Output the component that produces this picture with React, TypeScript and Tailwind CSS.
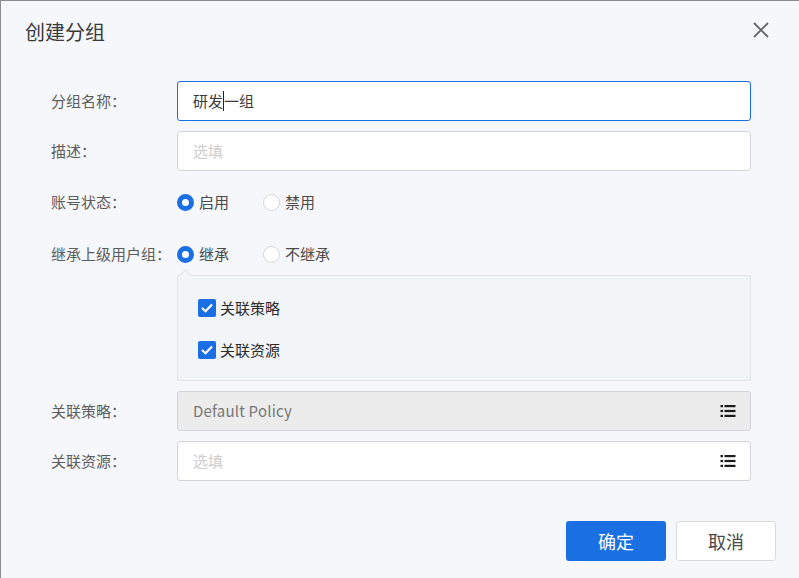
import React from "react";

const label = "-mt-[1px] w-[126px] shrink-0 text-[15px] leading-[20px] text-[#5c5c5c]";

function ListIcon() {
  return (
    <svg width="16" height="14" viewBox="0 0 16 14" className="block">
      <g fill="#1c1c1c">
        <rect x="0.5" y="1" width="2.5" height="2.2" />
        <rect x="4.5" y="1" width="11" height="2.2" />
        <rect x="0.5" y="5.9" width="2.5" height="2.2" />
        <rect x="4.5" y="5.9" width="11" height="2.2" />
        <rect x="0.5" y="10.8" width="2.5" height="2.2" />
        <rect x="4.5" y="10.8" width="11" height="2.2" />
      </g>
    </svg>
  );
}

function Radio({ on, text, w }: { on?: boolean; text: string; w: string }) {
  return (
    <div className={`flex items-center gap-[5px] ${w}`}>
      {on ? (
        <span className="h-[17px] w-[17px] rounded-full border-[5px] border-[#1a6fe3] bg-white" />
      ) : (
        <span className="h-[17px] w-[17px] rounded-full border border-[#d4d6da] bg-white" />
      )}
      <span className="text-[15px] leading-[20px] text-[#4a4a4a]">{text}</span>
    </div>
  );
}

function Check({ text }: { text: string }) {
  return (
    <div className="flex items-center gap-[4px]">
      <span className="flex h-[18px] w-[18px] items-center justify-center rounded-[2px] bg-[#1a6fe3]">
        <svg width="12" height="10" viewBox="0 0 12 10">
          <path d="M1 5 L4.5 8.2 L11 1.4" fill="none" stroke="#fff" strokeWidth="2.2" />
        </svg>
      </span>
      <span className="text-[15px] leading-[20px] text-[#2a2a2a]">{text}</span>
    </div>
  );
}

export default function App() {
  return (
    <div
      className="h-[578px] w-[799px] overflow-hidden border-l border-t border-[#8c8c8c] bg-[#f5f7fa]"
      style={{ fontFamily: '"Noto Sans CJK SC", "Noto Sans", sans-serif' }}
    >
      <div className="flex h-[80px] items-start justify-between pl-[24px] pr-[29px] pt-[17px]">
        <h1 className="text-[20px] font-normal leading-[28px] text-[#3a3a3a]">创建分组</h1>
        <svg width="18" height="18" viewBox="0 0 18 18" className="mt-[3px]">
          <path d="M2 2 L16 16 M16 2 L2 16" stroke="#666" strokeWidth="1.8" fill="none" />
        </svg>
      </div>

      <div className="flex flex-col pl-[50px]">
        <div className="flex items-center">
          <span className={label}>分组名称：</span>
          <div className="flex h-[40px] w-[574px] items-center rounded-[3px] border border-[#1a6fe3] bg-white pl-[15px] text-[15px] text-[#3a3a3a]">
            研发<span className="h-[20px] w-px bg-[#222]" />一组
          </div>
        </div>

        <div className="mt-[10px] flex items-center">
          <span className={label}>描述：</span>
          <div className="flex h-[40px] w-[574px] items-center rounded-[3px] border border-[#d2d4d9] bg-white pl-[15px] text-[15px] text-[#cdcdcd]">
            选填
          </div>
        </div>

        <div className="mt-[21px] flex h-[20px] items-center">
          <span className={label}>账号状态：</span>
          <Radio on text="启用" w="w-[86px]" />
          <Radio text="禁用" w="w-[86px]" />
        </div>

        <div className="mt-[32px] flex h-[20px] items-center">
          <span className={label}>继承上级用户组：</span>
          <Radio on text="继承" w="w-[86px]" />
          <Radio text="不继承" w="w-[86px]" />
        </div>

        <div className="ml-[126px] mt-[11px] w-[574px]">
          <div className="relative flex h-[106px] flex-col gap-[22px] rounded-[2px] border border-[#dfe2e7] bg-[#f2f5f8] pl-[20px] pt-[22px]">
            <span className="absolute -top-[5px] left-[3px] h-[9px] w-[9px] rotate-45 border-l border-t border-[#dfe2e7] bg-[#f2f5f8]" />
            <Check text="关联策略" />
            <Check text="关联资源" />
          </div>
        </div>

        <div className="mt-[10px] flex items-center">
          <span className={label}>关联策略：</span>
          <div className="flex h-[40px] w-[574px] items-center justify-between rounded-[3px] border border-[#d2d4d9] bg-[#ececec] pl-[15px] pr-[14px] text-[15px] tracking-[0.2px] text-[#777]">
            Default Policy
            <ListIcon />
          </div>
        </div>

        <div className="mt-[10px] flex items-center">
          <span className={label}>关联资源：</span>
          <div className="flex h-[40px] w-[574px] items-center justify-between rounded-[3px] border border-[#d2d4d9] bg-white pl-[15px] pr-[14px] text-[15px] text-[#cdcdcd]">
            选填
            <ListIcon />
          </div>
        </div>
      </div>

      <div className="mt-[40px] flex justify-end gap-[10px] pr-[23px]">
        <button className="h-[40px] w-[100px] rounded-[3px] bg-[#1a6fe3] text-[18px] text-white">确定</button>
        <button className="h-[40px] w-[100px] rounded-[3px] border border-[#d8dade] bg-white text-[18px] text-[#4a4a4a]">取消</button>
      </div>
    </div>
  );
}
